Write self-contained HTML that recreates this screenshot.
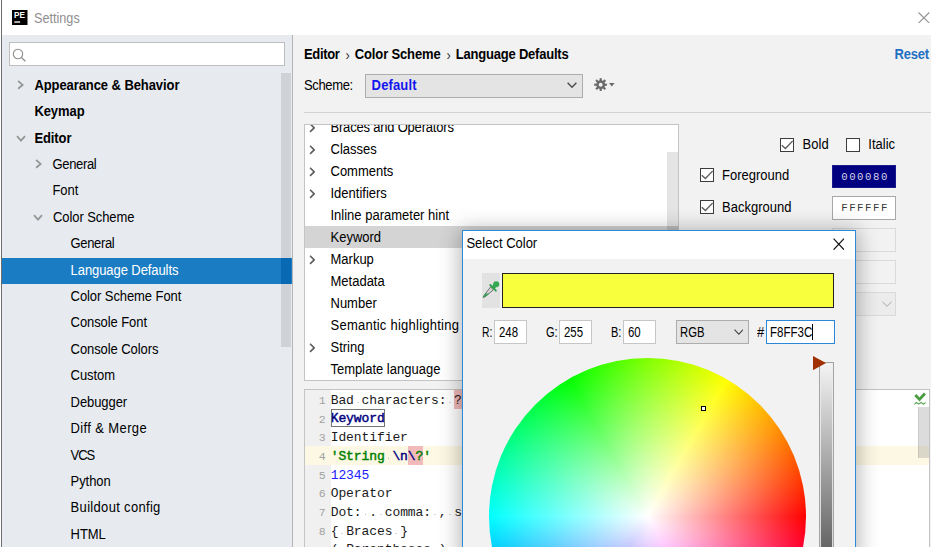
<!DOCTYPE html>
<html>
<head>
<meta charset="utf-8">
<title>Settings</title>
<style>
html,body{margin:0;padding:0;}
body{width:931px;height:548px;overflow:hidden;background:#fff;font-family:"Liberation Sans",sans-serif;font-size:13px;color:#000;position:relative;}
#win{position:absolute;left:0;top:0;width:931px;height:546.5px;overflow:hidden;background:#fff;}
.abs{position:absolute;}
.t{position:absolute;white-space:nowrap;line-height:16px;font-size:13px;transform:scaleY(1.06);transform-origin:0 12.5px;}
.b{font-weight:bold;}
/* left panel */
#left{position:absolute;left:2px;top:35px;width:290px;height:512px;background:#e7ebf0;}
#lborder{position:absolute;left:1px;top:0;width:1px;height:547px;background:#6e6e6e;}
#search{position:absolute;left:9px;top:42px;width:275.5px;height:23.6px;box-sizing:border-box;background:#fff;border:1px solid #bdbdbd;}
.row{position:absolute;left:2px;width:290px;height:26.41px;}
.row.sel{background:#1a7dc4;}
.row .t{top:5.45px;letter-spacing:-0.08px;}
.row.sel .t{color:#fff;top:4.85px;}
#lscroll{position:absolute;left:280.6px;top:72.5px;width:10.5px;height:274.5px;background:rgba(0,0,0,0.1);}
#divider{position:absolute;left:291.5px;top:35px;width:1.5px;height:512px;background:#b4b4b4;}
/* right panel */
#right{position:absolute;left:293px;top:35px;width:638px;height:512px;background:#f2f2f2;}
#sep{position:absolute;left:304px;top:112px;width:627px;height:1px;background:#d1d1d1;}
#combo{position:absolute;left:365px;top:74px;width:218px;height:23.5px;box-sizing:border-box;background:#e4e4e4;border:1px solid #adadad;}
#list{position:absolute;left:304px;top:123.5px;width:375px;height:257px;box-sizing:border-box;background:#fff;border:1px solid #c4c4c4;overflow:hidden;}
.li{position:absolute;left:0;width:373px;height:22px;}
.li .t{left:25.5px;top:3.8px;}
.li.sel{background:#d4d4d4;}
#listscroll{position:absolute;left:667px;top:152px;width:11px;height:110px;background:rgba(0,0,0,0.105);}
.cb{position:absolute;width:14px;height:14.2px;box-sizing:border-box;background:#fff;border:1.2px solid #3c3c3c;margin-top:-0.5px;}
.sw{position:absolute;left:832.3px;width:64px;height:23px;box-sizing:border-box;font-family:"Liberation Mono",monospace;font-size:10.7px;line-height:22px;text-align:center;letter-spacing:1.55px;text-indent:1.55px;}
.sw.dis{background:#f2f2f2;border:1px solid #dadada;}
/* preview */
#prev{position:absolute;left:304px;top:389px;width:626px;height:170px;box-sizing:border-box;background:#fff;border:1px solid #c4c4c4;overflow:hidden;}
#gutter{position:absolute;left:0;top:0;width:25.7px;height:170px;background:#f0f0f0;}
.cl{position:absolute;left:0;width:624px;height:18.7px;}
.cl .n{position:absolute;left:0;width:20.6px;text-align:right;font-family:"Liberation Mono",monospace;font-size:11.5px;line-height:18.7px;color:#a2a2a2;top:2px;}
.cl .c{position:absolute;left:25.7px;top:0;font-family:"Liberation Mono",monospace;font-size:13px;line-height:18.7px;white-space:pre;letter-spacing:-0.09px;color:#1a1a1a;}
/* dialog */
#dlg{position:absolute;left:462px;top:230px;width:393.5px;height:330px;box-sizing:border-box;background:#f2f2f2;border:1px solid #2b8ad9;box-shadow:0 2px 20px 2px rgba(0,0,0,0.30);}
#dtitle{position:absolute;left:0;top:0;width:100%;height:27.5px;background:#fff;}
.fld{position:absolute;top:89.2px;height:24px;box-sizing:border-box;background:#fff;border:1px solid #c6c6c6;}
.ws{background:radial-gradient(circle at 50% 62%, #c0c0c0 0.35px, rgba(192,192,192,0) 0.85px);}
.pk{position:absolute;top:0;height:18.7px;background:#f2baba;}
</style>
</head>
<body>
<div id="win">
<!-- TITLEBAR -->
<svg class="abs" style="left:12px;top:9.5px" width="15.5" height="15.5" viewBox="0 0 16 16"><rect width="16" height="16" fill="#000"/><rect x="2.4" y="11.7" width="6" height="1.4" fill="#fff"/><text x="2.1" y="8.5" font-family="Liberation Sans" font-weight="bold" font-size="8.6" fill="#fff" textLength="11.2" lengthAdjust="spacingAndGlyphs">PE</text></svg>
<div class="t" style="left:34.3px;top:10.2px;color:#8f8f8f;font-size:14.8px;transform:scaleX(0.855);transform-origin:0 0">Settings</div>
<svg class="abs" style="left:918.2px;top:11.6px" width="11.8" height="11.6" viewBox="0 0 11.8 11.6"><path d="M0.5 0.5 L11.3 11.1 M11.3 0.5 L0.5 11.1" stroke="#949494" stroke-width="1.15" fill="none"/></svg>
<!-- LEFT -->
<div id="left"></div>
<div id="lborder"></div>
<div id="search"><svg class="abs" style="left:2.2px;top:4.6px" width="15" height="15" viewBox="0 0 15 15"><circle cx="6" cy="6" r="4.7" fill="none" stroke="#8b8b8b" stroke-width="1.1"/><path d="M9.4 9.4 L13.3 13.3" stroke="#8b8b8b" stroke-width="1.3"/></svg></div>
<div class="row" style="top:72.35px"><svg class="abs" style="left:15.1px;top:7.9px" width="6.8" height="9.8" viewBox="0 0 6.8 9.8"><path d="M1.1 1 L5.6 4.9 L1.1 8.8" fill="none" stroke="#969696" stroke-width="1.8"/></svg><div class="t b" style="left:32.4px">Appearance &amp; Behavior</div></div>
<div class="row" style="top:98.76px"><div class="t b" style="left:32.4px">Keymap</div></div>
<div class="row" style="top:125.17px"><svg class="abs" style="left:14.2px;top:9.5px" width="10" height="7.2" viewBox="0 0 10 7.2"><path d="M1 1.2 L5 5.6 L9 1.2" fill="none" stroke="#969696" stroke-width="1.8"/></svg><div class="t b" style="left:32.4px">Editor</div></div>
<div class="row" style="top:151.58px"><svg class="abs" style="left:33.1px;top:7.9px" width="6.8" height="9.8" viewBox="0 0 6.8 9.8"><path d="M1.1 1 L5.6 4.9 L1.1 8.8" fill="none" stroke="#969696" stroke-width="1.8"/></svg><div class="t" style="left:50.5px;letter-spacing:-0.35px">General</div></div>
<div class="row" style="top:177.99px"><div class="t" style="left:50.5px">Font</div></div>
<div class="row" style="top:204.40px"><svg class="abs" style="left:31.4px;top:9.5px" width="10" height="7.2" viewBox="0 0 10 7.2"><path d="M1 1.2 L5 5.6 L9 1.2" fill="none" stroke="#969696" stroke-width="1.8"/></svg><div class="t" style="left:51px">Color Scheme</div></div>
<div class="row" style="top:230.81px"><div class="t" style="left:68.6px;letter-spacing:-0.35px">General</div></div>
<div class="row sel" style="top:257.82px;height:25.9px"><div class="t" style="left:68.6px">Language Defaults</div></div>
<div class="row" style="top:283.63px"><div class="t" style="left:68.6px">Color Scheme Font</div></div>
<div class="row" style="top:310.04px"><div class="t" style="left:68.6px">Console Font</div></div>
<div class="row" style="top:336.45px"><div class="t" style="left:68.6px">Console Colors</div></div>
<div class="row" style="top:362.86px"><div class="t" style="left:68.6px">Custom</div></div>
<div class="row" style="top:389.27px"><div class="t" style="left:68.6px">Debugger</div></div>
<div class="row" style="top:415.68px"><div class="t" style="left:68.6px;letter-spacing:0.37px">Diff &amp; Merge</div></div>
<div class="row" style="top:442.09px"><div class="t" style="left:68.6px;letter-spacing:-1.1px">VCS</div></div>
<div class="row" style="top:468.50px"><div class="t" style="left:68.6px">Python</div></div>
<div class="row" style="top:494.91px"><div class="t" style="left:68.6px;letter-spacing:0.32px">Buildout config</div></div>
<div class="row" style="top:521.32px"><div class="t" style="left:68.6px">HTML</div></div>
<div id="lscroll"></div>
<div class="abs" style="left:280.6px;top:257.82px;width:10.9px;height:25.9px;background:#0a69b4"></div>
<div id="divider"></div>
<!-- RIGHT -->
<div id="right"></div>
<div class="t b" style="left:304px;top:47.2px;"><span style="letter-spacing:-0.35px">Editor</span> <span style="font-weight:normal;color:#333;position:relative;top:0.7px;margin:0 1.5px 0 2.3px">›</span> <span style="letter-spacing:-0.15px">Color Scheme</span> <span style="font-weight:normal;color:#333;position:relative;top:0.7px;margin:0 1.5px 0 2.3px">›</span> <span style="letter-spacing:-0.22px">Language Defaults</span></div>
<div class="t b" style="left:894.6px;top:47.2px;color:#1f6fc2;letter-spacing:-0.2px">Reset</div>
<div class="t " style="left:304px;top:78.1px;letter-spacing:-0.35px">Scheme:</div>
<div id="combo"></div>
<div class="t b" style="left:371.6px;top:77.7px;color:#1414f0;letter-spacing:0.15px">Default</div>
<svg class="abs" style="left:567px;top:82.3px" width="10" height="6.4" viewBox="0 0 10 6.4"><path d="M0.6 0.8 L5 5.3 L9.4 0.8" fill="none" stroke="#4a4a4a" stroke-width="1.35"/></svg>
<svg class="abs" style="left:594px;top:77.8px" width="13.4" height="13.4" viewBox="-10 -10 20 20"><g fill="#6a6a6a"><rect x="-1.6" y="-9.8" width="3.2" height="5.5" transform="rotate(0)"/><rect x="-1.6" y="-9.8" width="3.2" height="5.5" transform="rotate(45)"/><rect x="-1.6" y="-9.8" width="3.2" height="5.5" transform="rotate(90)"/><rect x="-1.6" y="-9.8" width="3.2" height="5.5" transform="rotate(135)"/><rect x="-1.6" y="-9.8" width="3.2" height="5.5" transform="rotate(180)"/><rect x="-1.6" y="-9.8" width="3.2" height="5.5" transform="rotate(225)"/><rect x="-1.6" y="-9.8" width="3.2" height="5.5" transform="rotate(270)"/><rect x="-1.6" y="-9.8" width="3.2" height="5.5" transform="rotate(315)"/><circle r="6.6"/></g><circle r="2.9" fill="#f2f2f2"/></svg>
<svg class="abs" style="left:609.1px;top:83.4px" width="5.6" height="3.5" viewBox="0 0 6 3.5"><path d="M0 0 L6 0 L3 3.5 Z" fill="#6a6a6a"/></svg>
<div id="sep"></div>
<div id="list">
<div class="li" style="top:-8.6px"><svg class="abs" style="left:3.8px;top:7px" width="6.7" height="9.7" viewBox="0 0 7 11"><path d="M0.9 0.9 L5.6 5.5 L0.9 10.1" fill="none" stroke="#5c5c5c" stroke-width="1.8"/></svg><div class="t" style="letter-spacing:-0.2px">Braces and Operators</div></div>
<div class="li" style="top:13.4px"><svg class="abs" style="left:3.8px;top:7px" width="6.7" height="9.7" viewBox="0 0 7 11"><path d="M0.9 0.9 L5.6 5.5 L0.9 10.1" fill="none" stroke="#5c5c5c" stroke-width="1.8"/></svg><div class="t">Classes</div></div>
<div class="li" style="top:35.4px"><svg class="abs" style="left:3.8px;top:7px" width="6.7" height="9.7" viewBox="0 0 7 11"><path d="M0.9 0.9 L5.6 5.5 L0.9 10.1" fill="none" stroke="#5c5c5c" stroke-width="1.8"/></svg><div class="t">Comments</div></div>
<div class="li" style="top:57.4px"><svg class="abs" style="left:3.8px;top:7px" width="6.7" height="9.7" viewBox="0 0 7 11"><path d="M0.9 0.9 L5.6 5.5 L0.9 10.1" fill="none" stroke="#5c5c5c" stroke-width="1.8"/></svg><div class="t">Identifiers</div></div>
<div class="li" style="top:79.4px"><div class="t">Inline parameter hint</div></div>
<div class="li sel" style="top:101.4px"><div class="t">Keyword</div></div>
<div class="li" style="top:123.4px"><svg class="abs" style="left:3.8px;top:7px" width="6.7" height="9.7" viewBox="0 0 7 11"><path d="M0.9 0.9 L5.6 5.5 L0.9 10.1" fill="none" stroke="#5c5c5c" stroke-width="1.8"/></svg><div class="t">Markup</div></div>
<div class="li" style="top:145.4px"><div class="t">Metadata</div></div>
<div class="li" style="top:167.4px"><div class="t">Number</div></div>
<div class="li" style="top:189.4px"><div class="t" style="letter-spacing:0.24px">Semantic highlighting</div></div>
<div class="li" style="top:211.4px"><svg class="abs" style="left:3.8px;top:7px" width="6.7" height="9.7" viewBox="0 0 7 11"><path d="M0.9 0.9 L5.6 5.5 L0.9 10.1" fill="none" stroke="#5c5c5c" stroke-width="1.8"/></svg><div class="t">String</div></div>
<div class="li" style="top:233.4px"><div class="t">Template language</div></div>
</div>
<div id="listscroll"></div>
<div class="cb" style="left:780px;top:138px"><svg class="abs" style="left:0;top:0" width="12" height="12" viewBox="0 0 12 12"><path d="M0.8 6.2 L4.4 9.5 L11.7 1.9" fill="none" stroke="#5a5a5a" stroke-width="1.3"/></svg></div>
<div class="t " style="left:802.6px;top:137.1px;">Bold</div>
<div class="cb" style="left:846px;top:138px"></div>
<div class="t " style="left:868.3px;top:137.1px;">Italic</div>
<div class="cb" style="left:699.5px;top:168px"><svg class="abs" style="left:0;top:0" width="12" height="12" viewBox="0 0 12 12"><path d="M0.8 6.2 L4.4 9.5 L11.7 1.9" fill="none" stroke="#5a5a5a" stroke-width="1.3"/></svg></div>
<div class="t " style="left:722px;top:167.7px;">Foreground</div>
<div class="cb" style="left:699.5px;top:200.3px"><svg class="abs" style="left:0;top:0" width="12" height="12" viewBox="0 0 12 12"><path d="M0.8 6.2 L4.4 9.5 L11.7 1.9" fill="none" stroke="#5a5a5a" stroke-width="1.3"/></svg></div>
<div class="t " style="left:722px;top:199.8px;">Background</div>
<div class="sw" style="top:165px;height:22.5px;background:#000080;border:1px solid #1a1a8a;color:#d4d4ea;">000080</div>
<div class="sw" style="top:196px;height:23.5px;line-height:22.5px;background:#fff;border:1px solid #a8a8a8;color:#3a3a3a;">FFFFFF</div>
<div class="sw dis" style="top:228px;height:23.5px"></div>
<div class="sw dis" style="top:260.2px;height:23.5px"></div>
<div class="sw dis" style="top:292px;height:23.5px;background:#ececec"><svg class="abs" style="left:49px;top:8px" width="10" height="6.5" viewBox="0 0 10 6.5"><path d="M0.5 0.6 L5 5.4 L9.5 0.6" fill="none" stroke="#a8a8a8" stroke-width="1"/></svg></div>
<!-- PREVIEW -->
<div id="prev">
<div id="gutter"></div>
<div class="abs" style="left:26.2px;top:18.5px;width:53.4px;height:18.2px;box-sizing:border-box;border:1px solid #747474;z-index:2"></div>
<div class="cl" style="top:-0.1px;"><div class="pk" style="left:149.1px;width:8px"></div><div class="n">1</div><div class="c" style="top:1.9px">Bad<span class="ws"> </span>characters:<span class="ws"> </span>?</div></div>
<div class="cl" style="top:18.6px;"><div class="n">2</div><div class="c" style="top:1.9px"><span style="-webkit-text-stroke:0.45px #000080;color:#000080;">Keyword</span></div></div>
<div class="cl" style="top:37.3px;"><div class="n">3</div><div class="c" style="top:1.9px">Identifier</div></div>
<div class="cl" style="top:56.0px;background:#fcf8e3;"><div class="pk" style="left:102.8px;width:15.4px"></div><div class="n">4</div><div class="c" style="top:1.9px"><span style="-webkit-text-stroke:0.45px #008000;color:#008000">'String<span class="ws"> </span></span><span style="-webkit-text-stroke:0.45px #000080;color:#000080">\n</span><span><span style="-webkit-text-stroke:0.45px #000080;color:#000080">\</span><span style="-webkit-text-stroke:0.45px #008000;color:#008000">?</span></span><span style="-webkit-text-stroke:0.45px #008000;color:#008000">'</span></div></div>
<div class="cl" style="top:74.7px;"><div class="n">5</div><div class="c" style="top:1.9px"><span style="color:#2020ff">12345</span></div></div>
<div class="cl" style="top:93.4px;"><div class="n">6</div><div class="c" style="top:1.9px">Operator</div></div>
<div class="cl" style="top:112.1px;"><div class="n">7</div><div class="c" style="top:1.9px">Dot:<span class="ws"> </span>.<span class="ws"> </span>comma:<span class="ws"> </span>,<span class="ws"> </span>semicolon:<span class="ws"> </span>;</div></div>
<div class="cl" style="top:130.8px;"><div class="n">8</div><div class="c" style="top:1.9px">{<span class="ws"> </span>Braces<span class="ws"> </span>}</div></div>
<div class="cl" style="top:149.5px;"><div class="n">9</div><div class="c" style="top:1.9px">(<span class="ws"> </span>Parentheses<span class="ws"> </span>)</div></div>
<svg class="abs" style="left:609px;top:2px" width="13" height="13.5" viewBox="0 0 13 13.5"><path d="M1.3 3.1 L5.5 7.4 L10.9 1.6" fill="none" stroke="#4a9c45" stroke-width="2.9"/><path d="M0.3 12.4 L2.4 10.4 L4.8 12 L7.1 10.4 L9.5 12.3 L11.6 10.4" fill="none" stroke="#5aa655" stroke-width="1.1" stroke-linejoin="round"/></svg>
<div class="abs" style="left:612.8px;top:17px;width:11.2px;height:50.6px;background:rgba(150,150,150,0.33);box-shadow:inset 1px 0 0 rgba(120,120,120,0.18)"></div>
</div>
<!-- DIALOG -->
<div id="dlg">
<div id="dtitle"></div>
<div class="t " style="left:3.4px;top:5.0px;">Select Color</div>
<svg class="abs" style="left:369.8px;top:6.9px" width="11.6" height="12.3" viewBox="0 0 12 12" preserveAspectRatio="none"><path d="M0.6 0.6 L11.4 11.4 M11.4 0.6 L0.6 11.4" stroke="#111" stroke-width="1.25" fill="none"/></svg>
<div class="abs" style="left:19px;top:42px;width:17.5px;height:34.6px;background:#e2e2e2"><svg class="abs" style="left:0;top:0" width="17.5" height="34.6" viewBox="0 0 17.5 34.6"><path d="M8.6 14.0 L2 22.6 L1.2 24.4 L3.1 23.8 L11.4 16.8 Z" fill="#d8d8d8" stroke="#606060" stroke-width="0.9" stroke-linejoin="round"/><path d="M3.6 20.6 L7.4 20.5 L3.1 23.8 L1.2 24.4 L2 22.6 Z" fill="#2fa24e"/><path d="M8.3 12 L13.9 17.6" stroke="#2fa24e" stroke-width="2" stroke-linecap="round"/><path d="M11.1 14.8 L14 11.6" stroke="#2fa24e" stroke-width="3.6"/><circle cx="14.2" cy="11.2" r="3.05" fill="#35a853"/></svg></div>
<div class="abs" style="left:38.69999999999999px;top:42px;width:332.09999999999997px;height:34.6px;box-sizing:border-box;background:#f8ff3c;border:1px solid #222"></div>
<div class="t " style="transform:scale(0.8,1.06);transform-origin:0 12.5px;left:19.399999999999977px;top:93.9px;">R:</div>
<div class="fld" style="left:31.19999999999999px;width:32.6px"></div><div class="t " style="transform:scale(0.88,1.06);transform-origin:0 12.5px;left:35.80000000000001px;top:93.9px;">248</div>
<div class="t " style="transform:scale(0.85,1.06);transform-origin:0 12.5px;left:83.20000000000005px;top:93.9px;">G:</div>
<div class="fld" style="left:96.20000000000005px;width:32.6px"></div><div class="t " style="transform:scale(0.88,1.06);transform-origin:0 12.5px;left:100.79999999999995px;top:93.9px;">255</div>
<div class="t " style="transform:scale(0.85,1.06);transform-origin:0 12.5px;left:148.20000000000005px;top:93.9px;">B:</div>
<div class="fld" style="left:160px;width:32.6px"></div><div class="t " style="transform:scale(0.88,1.06);transform-origin:0 12.5px;left:164.60000000000002px;top:93.9px;">60</div>
<div class="fld" style="left:212.5px;width:73px;background:#e4e4e4;border-color:#adadad"></div><div class="t " style="transform:scale(0.87,1.06);transform-origin:0 12.5px;left:217px;top:93.7px;">RGB</div>
<svg class="abs" style="left:270.5px;top:98px" width="9.6" height="6.4" viewBox="0 0 9.6 6.4"><path d="M0.5 0.6 L4.8 5.2 L9.1 0.6" fill="none" stroke="#444" stroke-width="1.05"/></svg>
<div class="t " style="left:294px;top:93.7px;">#</div>
<div class="fld" style="left:302.6px;width:69.8px;border:1.5px solid #2b87d8"></div><div class="t " style="left:307.20000000000005px;top:93.9px;letter-spacing:0;transform:scale(0.885,1.06);transform-origin:0 12.5px">F8FF3C</div>
<div class="abs" style="left:348.79999999999995px;top:93px;width:1px;height:16px;background:#000"></div>
<div class="abs" style="left:25.5px;top:126.5px;width:317.0px;height:317.0px;border-radius:50%;background:radial-gradient(circle closest-side, #fff 0%, rgba(255,255,255,0) 100%), conic-gradient(from 90deg, #f00, #f0f, #00f, #0ff, #0f0, #ff0, #f00);"></div>
<div class="abs" style="left:237.79999999999995px;top:174.60000000000002px;width:5px;height:5px;box-sizing:border-box;background:#fff;border:1px solid #000"></div>
<div class="abs" style="left:356.29999999999995px;top:131px;width:14.6px;height:330px;box-sizing:border-box;border:1px solid #a4a4a4;box-shadow:inset 0 0 0 1px rgba(236,236,236,0.85);background:linear-gradient(to bottom,#f4f4f4 0px,#000 316px)"></div>
<svg class="abs" style="left:349.79999999999995px;top:125px" width="13" height="14.2" viewBox="0 0 13 14.2"><path d="M0 0 L13 7.1 L0 14.2 Z" fill="#a03000"/></svg>
</div>
</div>
</body>
</html>
